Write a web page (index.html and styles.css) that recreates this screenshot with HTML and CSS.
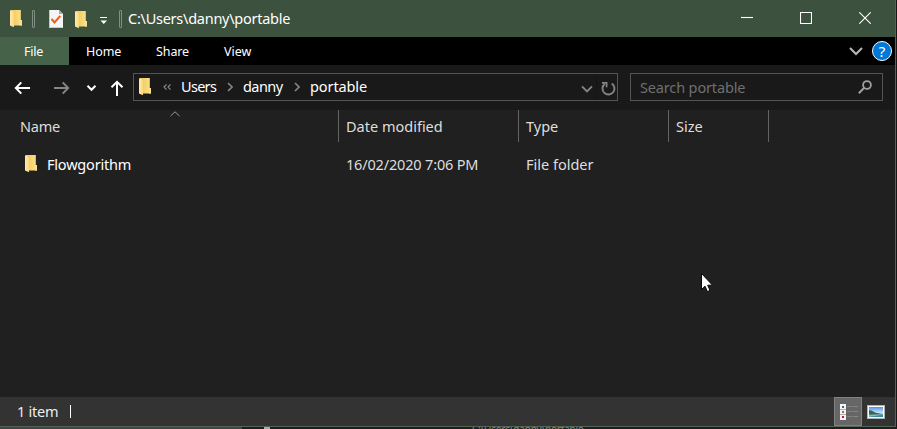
FILE: index.html
```html
<!DOCTYPE html>
<html lang="en">
<head>
<meta charset="utf-8">
<title>C:\Users\danny\portable</title>
<link rel="stylesheet" href="styles.css">
</head>
<body>
<svg width="0" height="0" class="defs">
  <defs>
    <linearGradient id="fg" x1="0" y1="0" x2="1" y2="0"><stop offset="0" stop-color="#eec65c"/><stop offset="1" stop-color="#ffe28a"/></linearGradient>
    <linearGradient id="ff" x1="0" y1="0" x2="1" y2="0"><stop offset="0" stop-color="#ffeab0"/><stop offset="1" stop-color="#fbd877"/></linearGradient>
    <linearGradient id="sky" x1="0" y1="0" x2="0" y2="1"><stop offset="0" stop-color="#4d94ec"/><stop offset=".55" stop-color="#c5e0f3"/><stop offset="1" stop-color="#67a4c4"/></linearGradient>
    <symbol id="folder" viewBox="0 0 12 18">
      <path d="M1 0H10.8V10H12V15.5H1Z" fill="url(#fg)"/>
      <path d="M0 0.8L1 0 4 2.5V17.2L0 15.4Z" fill="url(#ff)"/>
      <path d="M10 10H12V15.5H10Z" fill="#ffe08a"/>
    </symbol>
  </defs>
</svg>
<div class="window">
  <header class="titlebar">
    <svg class="folder f-app"><use href="#folder"/></svg>
    <i class="grip g1"></i>
    <svg class="check" viewBox="0 0 14 18"><path d="M0 0H10L14 4V18H0Z" fill="#f3f5f6"/><path d="M10 0V4H14Z" fill="#a5aaa7"/><path d="M.5 0V17.5H13.5" fill="none" stroke="#c4cbc7"/><path d="M2.5 9L5.5 12.4 11.3 5.8" fill="none" stroke="#ee5d1c" stroke-width="2"/></svg>
    <svg class="folder f-new"><use href="#folder"/></svg>
    <svg class="drop" viewBox="0 0 8 8"><path d="M0 0H7V1H0ZM.5 3.5H7L3.75 7Z" fill="#fff"/></svg>
    <i class="grip g2"></i>
    <span class="title">C:\Users\danny\portable</span>
    <div class="controls">
      <svg viewBox="0 0 12 12"><path d="M0 5.5H12"/></svg>
      <svg viewBox="0 0 12 12"><path d="M.5.5H11.5V11.5H.5Z"/></svg>
      <svg viewBox="0 0 12 12"><path d="M.3.3L11.7 11.7M11.7.3L.3 11.7"/></svg>
    </div>
  </header>
  <nav class="ribbon">
    <span class="tab file">File</span><span class="tab home">Home</span><span class="tab share">Share</span><span class="tab view">View</span>
    <svg class="expand" viewBox="0 0 14 9"><path d="M1 1L7 7 13 1" fill="none" stroke="#b4b4b4" stroke-width="2.2"/></svg>
    <span class="help">?</span>
  </nav>
  <div class="navbar">
    <svg class="arrows" viewBox="0 0 133 45" fill="none" stroke="#fff" stroke-width="2">
      <path d="M30 23H16M21.3 17.4L15.8 23 21.3 28.6"/>
      <path d="M54 23H68M62.7 17.4L68.2 23 62.7 28.6" stroke="#858585"/>
      <path d="M87.5 20.8L91.5 24.8 95.5 20.8"/>
      <path d="M117 31V17M111.5 22.3L117 16.8 122.5 22.3"/>
    </svg>
    <div class="address">
      <svg class="folder f-path"><use href="#folder"/></svg>
      <svg class="dbl" viewBox="0 0 8 6"><path d="M3.5.4L1 3 3.5 5.6M7.5.4L5 3 7.5 5.6" fill="none" stroke="#8f8f8f" stroke-width="1.1"/></svg>
      <span class="crumb users">Users</span>
      <svg class="sep s1" viewBox="0 0 6 10"><path d="M1 1L5 5 1 9"/></svg>
      <span class="crumb danny">danny</span>
      <svg class="sep s2" viewBox="0 0 6 10"><path d="M1 1L5 5 1 9"/></svg>
      <span class="crumb portable">portable</span>
      <svg class="addr-tools" viewBox="0 0 40 26" fill="none" stroke="#858585" stroke-width="1.9"><path d="M5 12.4L10 17.4 15 12.4"/><path d="M19.5 0V26" stroke="#151515" stroke-width="1"/><path d="M27.6 10A6 6 0 1 0 34.7 9.5"/><path d="M25 8.8H29.6V13.2" stroke-width="1.7"/></svg>
    </div>
    <div class="search"><span>Search portable</span>
      <svg viewBox="0 0 14 14" fill="none" stroke="#a0a0a0"><circle cx="9" cy="5" r="3.9" stroke-width="1.8"/><path d="M6 8L.8 13.2" stroke-width="2"/></svg>
    </div>
  </div>
  <main class="list">
    <svg class="sort" viewBox="0 0 10 6"><path d="M.5 5L5 .8 9.5 5" fill="none" stroke="#999"/></svg>
    <div class="row head"><span class="name"><b class="t-name">Name</b></span><span class="date"><b class="t-date">Date modified</b></span><span class="type"><b class="t-type">Type</b></span><span class="size"><b class="t-size">Size</b></span></div>
    <div class="row item"><span class="name"><svg class="folder f-item"><use href="#folder"/></svg><b class="t-flow">Flowgorithm</b></span><span class="date"><b class="t-when">16/02/2020 7:06 PM</b></span><span class="type"><b class="t-kind">File folder</b></span></div>
  </main>
  <footer class="status">
    <b class="t-count">1 item</b><i class="bar"></i>
    <div class="mode">
      <svg viewBox="0 0 28 29"><g fill="#f5f5f5"><path d="M6 7H12V12H6ZM6 12.5H12V17.5H6ZM6 18H12V23H6Z"/></g><path d="M8 9H10V11H8Z" fill="#3d6982"/><path d="M8 14H10V16H8Z" fill="#b66b35"/><path d="M8 19H10V21H8Z" fill="#d21919"/><path d="M13 9.5H18M19 9.5H24M13 14.5H18M19 14.5H24M13 19.5H18M19 19.5H24" stroke="#858585"/></svg>
    </div>
    <svg class="thumb" viewBox="0 0 18 14"><path d="M0 0H18V14H0Z" fill="#b0b0b0"/><path d="M1 1H17V13H1Z" fill="#fff"/><path d="M2 2H16V12H2Z" fill="url(#sky)"/><path d="M2 5Q5 5 8 7.5L16 9.2 2 9.8Z" fill="#326853"/><path d="M2 12L16 9.5V12Z" fill="#3c8aa0"/></svg>
  </footer>
</div>
<div class="behind"><i class="smudge"></i><i class="knob"></i><span class="under">C:\Users\danny\portable</span></div>
<svg class="pointer" viewBox="0 0 12 19"><path d="M.5.5V16.5L4 13.2 6.4 18.5 9 17.4 6.7 12.2H11.5Z" fill="#fff" stroke="#080812"/></svg>
</body>
</html>
```
FILE: styles.css
```css
* { box-sizing: border-box; }
body { margin: 0; width: 897px; height: 429px; overflow: hidden; background: #171717; font: 15px/20px "Noto Sans", "Open Sans", sans-serif; color: #fff; }
b { font-weight: 400; }
span, b { white-space: nowrap; }
svg, i { display: block; flex: none; }
.defs { position: absolute; }
.window { width: 896px; height: 427px; border-right: 1px solid #526454; border-bottom: 1px solid #526454; background: #202020; }
.folder { width: 12px; height: 18px; }

.titlebar { height: 37px; background: #3c523e; display: flex; align-items: flex-start; }
.f-app { margin: 10px 0 0 10px; }
.grip { width: 3px; height: 18px; margin-top: 10px; border: 1px solid #829084; border-radius: 1px; }
.g1 { margin-left: 10px; }
.check { width: 14px; height: 18px; margin: 10px 0 0 14px; }
.f-new { margin: 11px 0 0 12px; }
.drop { width: 8px; height: 8px; margin: 17px 0 0 13px; }
.g2 { margin-left: 11px; }
.title { margin: 8px 0 0 6px; width: 170px; font-size: 14.5px; letter-spacing: -.26px; }
.controls { display: flex; gap: 47px; margin: 12px 24px 0 auto; }
.controls svg { width: 12px; height: 12px; fill: none; stroke: #fff; stroke-width: 1.1; }

.ribbon { height: 28px; background: #000; display: flex; align-items: center; font-size: 12.5px; }
.tab { padding-top: 1px; }
.file { width: 69px; height: 28px; line-height: 28px; padding-left: 24px; background: #466249; letter-spacing: -.2px; }
.home { margin-left: 17px; width: 70px; letter-spacing: -.1px; }
.share { width: 68px; letter-spacing: -.1px; }
.expand { width: 14px; height: 9px; margin-left: auto; }
.help { width: 20px; height: 20px; margin: 0 3px 0 9px; border: 1px solid #fff; border-radius: 50%; background: #0078d7; text-align: center; font: 15px/18px "Noto Sans", sans-serif; }

.navbar { height: 45px; background: #191919; display: flex; align-items: flex-start; }
.arrows { width: 133px; height: 45px; }
.address, .search { height: 28px; margin-top: 8px; border: 1px solid #535353; display: flex; align-items: center; }
.address { width: 485px; }
.f-path { margin: -1px 0 0 5px; }
.dbl { width: 8px; height: 6px; margin: 0 10px 0 12px; }
.crumb { font-size: 14.5px; padding-bottom: 2px; }
.users { width: 46px; letter-spacing: -.7px; }
.danny { width: 51px; margin-left: 10px; letter-spacing: -.55px; }
.portable { margin-left: 10px; letter-spacing: -.1px; }
.sep { width: 6px; height: 10px; fill: none; stroke: #858585; stroke-width: 1.6; }
.addr-tools { width: 40px; height: 26px; margin-left: auto; }
.search { width: 253px; margin-left: 12px; color: #6f6f6f; padding: 0 10px 0 9px; justify-content: space-between; font-size: 14.5px; letter-spacing: -.15px; }
.search svg { width: 14px; height: 14px; }

.list { position: relative; height: 287px; background: #202020; }
.sort { position: absolute; left: 170px; top: 1px; width: 10px; height: 6px; }
.row { display: grid; grid-template-columns: 339px 180px 150px 100px; font-size: 14.5px; color: #dedede; }
.row > span { display: flex; align-items: center; padding-left: 7px; }
.row b { padding-bottom: 2px; }
.head { height: 32px; }
.head > span { border-right: 1px solid #636363; padding-top: 2px; }
.row > .name { padding-left: 20px; }
.t-name { letter-spacing: -.2px; }
.item { height: 40px; margin-top: 3px; }
.item .t-flow { color: #fff; margin-left: 10px; letter-spacing: -.2px; }
.t-when { letter-spacing: -.17px; }
.f-item { margin: -2px 0 0 5px; }

.status { height: 29px; background: #333; display: flex; align-items: center; font-size: 14.5px; color: #eee; padding-left: 17px; }
.t-count { width: 53px; padding-bottom: 2px; letter-spacing: -.25px; }
.bar { width: 1px; height: 13px; background: #fff; }
.mode { width: 28px; height: 29px; background: #666; border: 1px solid #828282; margin-left: auto; }
.mode svg { width: 28px; height: 29px; margin: -1px; }
.thumb { width: 18px; height: 14px; margin: 0 10px 0 5px; }

.behind { height: 2px; overflow: hidden; display: flex; background: #1e1e1e; }
.smudge { width: 242px; height: 2px; background: #444; }
.knob { width: 6px; height: 2px; margin-left: 22px; background: #aaa; }
.under { margin-left: 202px; font-size: 10px; line-height: 10px; margin-top: -3px; color: #888; letter-spacing: -.2px; }
.pointer { position: absolute; left: 701px; top: 273px; width: 12px; height: 19px; }
```
